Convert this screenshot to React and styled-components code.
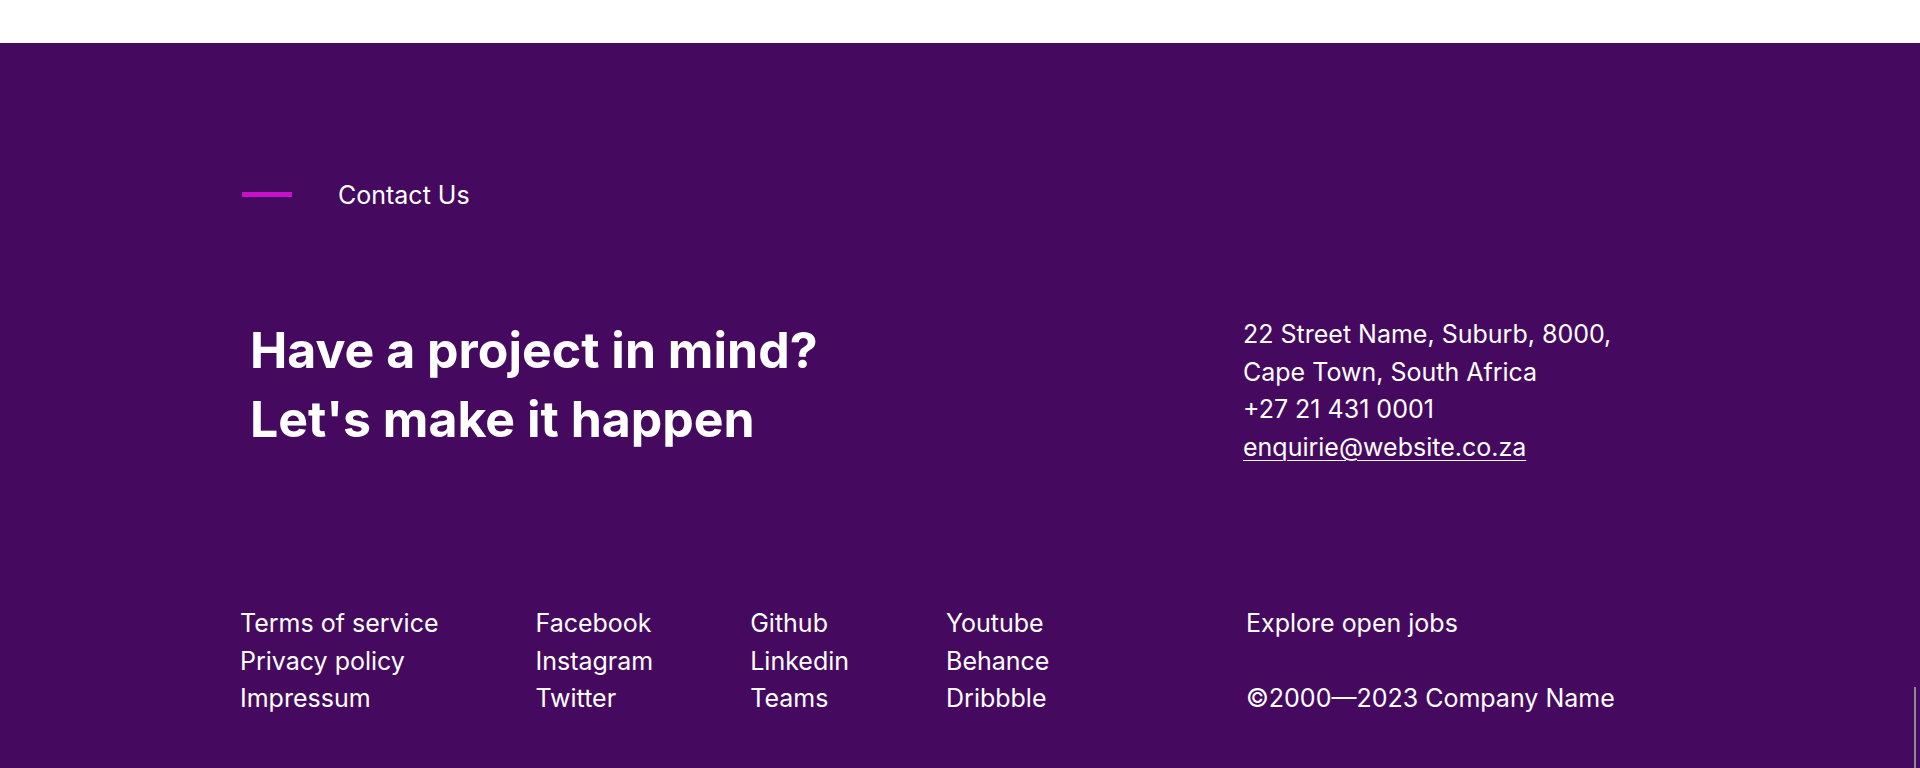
import React from 'react';
import styled, { createGlobalStyle } from 'styled-components';

const GlobalStyle = createGlobalStyle`
	html, body {
		margin: 0;
		padding: 0;
		background: #fff;
	}
	body {
		font-family: Inter, 'Noto Sans', 'Liberation Sans', sans-serif;
		-webkit-font-smoothing: antialiased;
	}
`;

const footerLinks = [
	['Terms of service', 'Privacy policy', 'Impressum'],
	['Facebook', 'Instagram', 'Twitter'],
	['Github', 'Linkedin', 'Teams'],
	['Youtube', 'Behance', 'Dribbble'],
];

const App = () => {
	return (
		<>
			<GlobalStyle />
			<TopSpacer />
			<Footer>
				<Container>
					<Eyebrow>
						<Dash />
						<EyebrowText>Contact Us</EyebrowText>
					</Eyebrow>
					<Row $top>
						<Heading>
							Have a project in mind?
							<br />
							Let's make it happen
						</Heading>
						<Address>
							<span>22 Street Name, Suburb, 8000,</span>
							<span>Cape Town, South Africa</span>
							<span>+27 21 431 0001</span>
							<Email href="#">enquirie@website.co.za</Email>
						</Address>
					</Row>
					<Row>
						<LinkGroups>
							{footerLinks.map((col, i) => (
								<LinkColumn key={i}>
									{col.map((l) => (
										<FooterLink key={l} href="#">
											{l}
										</FooterLink>
									))}
								</LinkColumn>
							))}
						</LinkGroups>
						<Meta>
							<FooterLink href="#">Explore open jobs</FooterLink>
							<Copyright>©2000—2023 Company Name</Copyright>
						</Meta>
					</Row>
				</Container>
				<ScrollThumb />
			</Footer>
		</>
	);
};

export default App;

const TopSpacer = styled.div`
	height: 43px;
	background: #fff;
`;

const Footer = styled.footer`
	position: relative;
	background: #450a5f;
	color: #fff;
	padding: 137px 0 60px;
	min-height: calc(768px - 43px);
	box-sizing: border-box;
`;

const Container = styled.div`
	width: 1440px;
	margin: 0 auto;
`;

const Eyebrow = styled.div`
	display: flex;
	align-items: center;
	gap: 46px;
	padding-left: 2px;
	height: 31px;
`;

const Dash = styled.span`
	display: block;
	width: 50px;
	height: 5px;
	margin-top: -3px;
	background: #c511c8;
`;

const EyebrowText = styled.span`
	font-size: 25px;
	line-height: 31px;
	font-weight: 400;
`;

const Row = styled.div`
	display: grid;
	grid-template-columns: 1003px 1fr;
	margin-top: ${(p) => (p.$top ? '101px' : '139px')};
`;

const Heading = styled.h2`
	margin: 0;
	padding: 4px 0 0 10px;
	font-size: 50px;
	line-height: 69px;
	font-weight: 700;
`;

const Address = styled.div`
	display: flex;
	flex-direction: column;
	padding-top: 4px;
	font-size: 25px;
	line-height: 37.5px;
`;

const Email = styled.a`
	color: #fff;
	text-decoration: underline;
	text-decoration-thickness: 1px;
	text-underline-offset: 4px;
	align-self: flex-start;
`;

const LinkGroups = styled.div`
	display: flex;
	gap: 97px;
`;

const LinkColumn = styled.div`
	display: flex;
	flex-direction: column;
`;

const FooterLink = styled.a`
	color: #fff;
	text-decoration: none;
	font-size: 25px;
	line-height: 37.5px;
`;

const Meta = styled.div`
	display: flex;
	flex-direction: column;
	justify-content: space-between;
	padding-left: 3px;
`;

const Copyright = styled.span`
	font-size: 25px;
	line-height: 37.5px;
`;

const ScrollThumb = styled.div`
	position: absolute;
	right: 4px;
	bottom: 0;
	width: 2px;
	height: 91px;
	background: #8c8c8c;
`;
